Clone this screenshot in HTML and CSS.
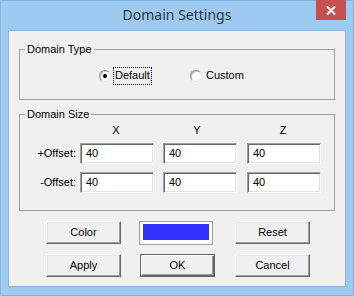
FILE: index.html
```html
<!DOCTYPE html>
<html>
<head>
<meta charset="utf-8">
<link rel="stylesheet" href="styles.css">
</head>
<body>
<div class="window">
  <div class="titlebar">
    <div class="title">Domain Settings</div>
    <div class="close">
      <svg width="10" height="9" viewBox="0 0 10 9"><path d="M1 0.5 L9 8.5 M9 0.5 L1 8.5" stroke="#fff" stroke-width="2"/></svg>
    </div>
  </div>
  <div class="client">
    <fieldset class="group group-type">
      <legend>Domain Type</legend>
      <div class="radios">
        <div class="radio"><span class="dot checked"></span><span class="rtext focus">Default</span></div>
        <div class="radio"><span class="dot"></span><span class="rtext">Custom</span></div>
      </div>
    </fieldset>
    <fieldset class="group group-size">
      <legend>Domain Size</legend>
      <div class="hdr-row">
        <span></span><span class="hdr">X</span><span class="hdr hdr-y">Y</span><span class="hdr">Z</span>
      </div>
      <div class="grid">
        <span class="lbl">+Offset:</span><div class="edit">40</div><div class="edit">40</div><div class="edit">40</div>
        <span class="lbl">-Offset:</span><div class="edit">40</div><div class="edit">40</div><div class="edit">40</div>
      </div>
    </fieldset>
    <div class="buttons">
      <div class="btn">Color</div>
      <div class="swatch"><div class="fill"></div></div>
      <div class="btn">Reset</div>
      <div class="btn">Apply</div>
      <div class="btn default">OK</div>
      <div class="btn">Cancel</div>
    </div>
  </div>
</div>
</body>
</html>
```
FILE: styles.css
```css
html, body {
  margin: 0;
  padding: 0;
  background: #9dcaf0;
}
.window {
  width: 354px;
  height: 296px;
  box-sizing: border-box;
  background: #9dcaf0;
  border: 1px solid #86b6e2;
  font-family: "Liberation Sans", Arial, sans-serif;
  font-size: 11px;
  color: #000;
}
.titlebar {
  height: 29px;
  display: grid;
  grid-template-columns: 1fr auto 1fr;
}
.title {
  grid-column: 2;
  font-family: "Noto Sans", "Open Sans", sans-serif;
  font-size: 14px;
  line-height: 20px;
  padding-top: 4px;
  color: #333;
}
.close {
  grid-column: 3;
  justify-self: end;
  width: 30px;
  height: 20px;
  margin-top: -1px;
  margin-right: 7px;
  background: #c75050;
  display: flex;
  align-items: center;
  justify-content: center;
}
.client {
  margin: 0 7px;
  height: 257px;
  box-sizing: border-box;
  background: #f0f0f0;
  border: 1px solid #8fb4d8;
  padding: 12px 0 0 10px;
}
.group {
  margin: 0;
  padding: 0;
  width: 316px;
  box-sizing: border-box;
  border: 1px solid #a0a0a0;
  min-width: 0;
}
.group legend {
  margin-left: 5px;
  padding: 0 2px;
  line-height: 13px;
}
.group-type {
  padding-bottom: 15px;
}
.radios {
  display: flex;
  margin-top: 11px;
  padding-left: 79px;
  height: 17px;
  align-items: center;
}
.radio {
  display: flex;
  align-items: center;
  width: 91px;
}
.dot {
  width: 10px;
  height: 10px;
  border-radius: 50%;
  border: 1px solid;
  border-color: #8a8a8a #e8e8e8 #e8e8e8 #8a8a8a;
  background: #fff;
  box-shadow: inset 1px 1px 0 #c8c8c8;
  display: flex;
  align-items: center;
  justify-content: center;
  margin-right: 2px;
}
.dot.checked::after {
  content: "";
  width: 4px;
  height: 4px;
  border-radius: 50%;
  background: #000;
}
.rtext {
  padding: 1px 1px 2px;
  border: 1px dotted transparent;
  line-height: 13px;
}
.rtext.focus {
  border-color: #000;
}
.group-size {
  margin-top: 8px;
  padding-bottom: 17px;
}
.hdr-row, .grid {
  display: grid;
  grid-template-columns: 60px 83px 84px 74px;
}
.hdr-row {
  margin-top: 3px;
  height: 13px;
  margin-bottom: 6px;
  line-height: 13px;
}
.hdr {
  width: 74px;
  text-align: center;
  padding-right: 2px;
  box-sizing: border-box;
}
.hdr-y {
  padding-right: 6px;
}
.grid {
  grid-template-rows: 21px 21px;
  row-gap: 8px;
}
.lbl {
  text-align: right;
  padding-right: 4px;
  line-height: 21px;
}
.edit {
  width: 74px;
  height: 21px;
  box-sizing: border-box;
  background: #fff;
  border: 1px solid;
  border-color: #a0a0a0 #fff #fff #a0a0a0;
  box-shadow: inset 1px 1px 0 #696969, inset -1px -1px 0 #e3e3e3;
  padding-left: 5px;
  line-height: 18px;
}
.buttons {
  margin-top: 10px;
  padding-left: 27px;
  display: grid;
  grid-template-columns: 94px 95px 75px;
  grid-template-rows: 23px 23px;
  row-gap: 10px;
}
.btn {
  width: 75px;
  height: 23px;
  box-sizing: border-box;
  background: #f0f0f0;
  border: 1px solid;
  border-color: #fff #696969 #696969 #fff;
  box-shadow: inset -1px -1px 0 #a0a0a0, inset 1px 1px 0 #e3e3e3;
  text-align: center;
  line-height: 20px;
}
.btn.default {
  border-color: #646464;
  box-shadow: inset 1px 1px 0 #fff, inset -1px -1px 0 #696969, inset -2px -2px 0 #a0a0a0;
}
.swatch {
  width: 74px;
  height: 24px;
  margin-left: -1px;
  box-sizing: border-box;
  border: 1px solid #a0a0a0;
  background: #fff;
  padding: 2px 3px 4px;
}
.fill {
  height: 100%;
  background: #3232ff;
}
```
